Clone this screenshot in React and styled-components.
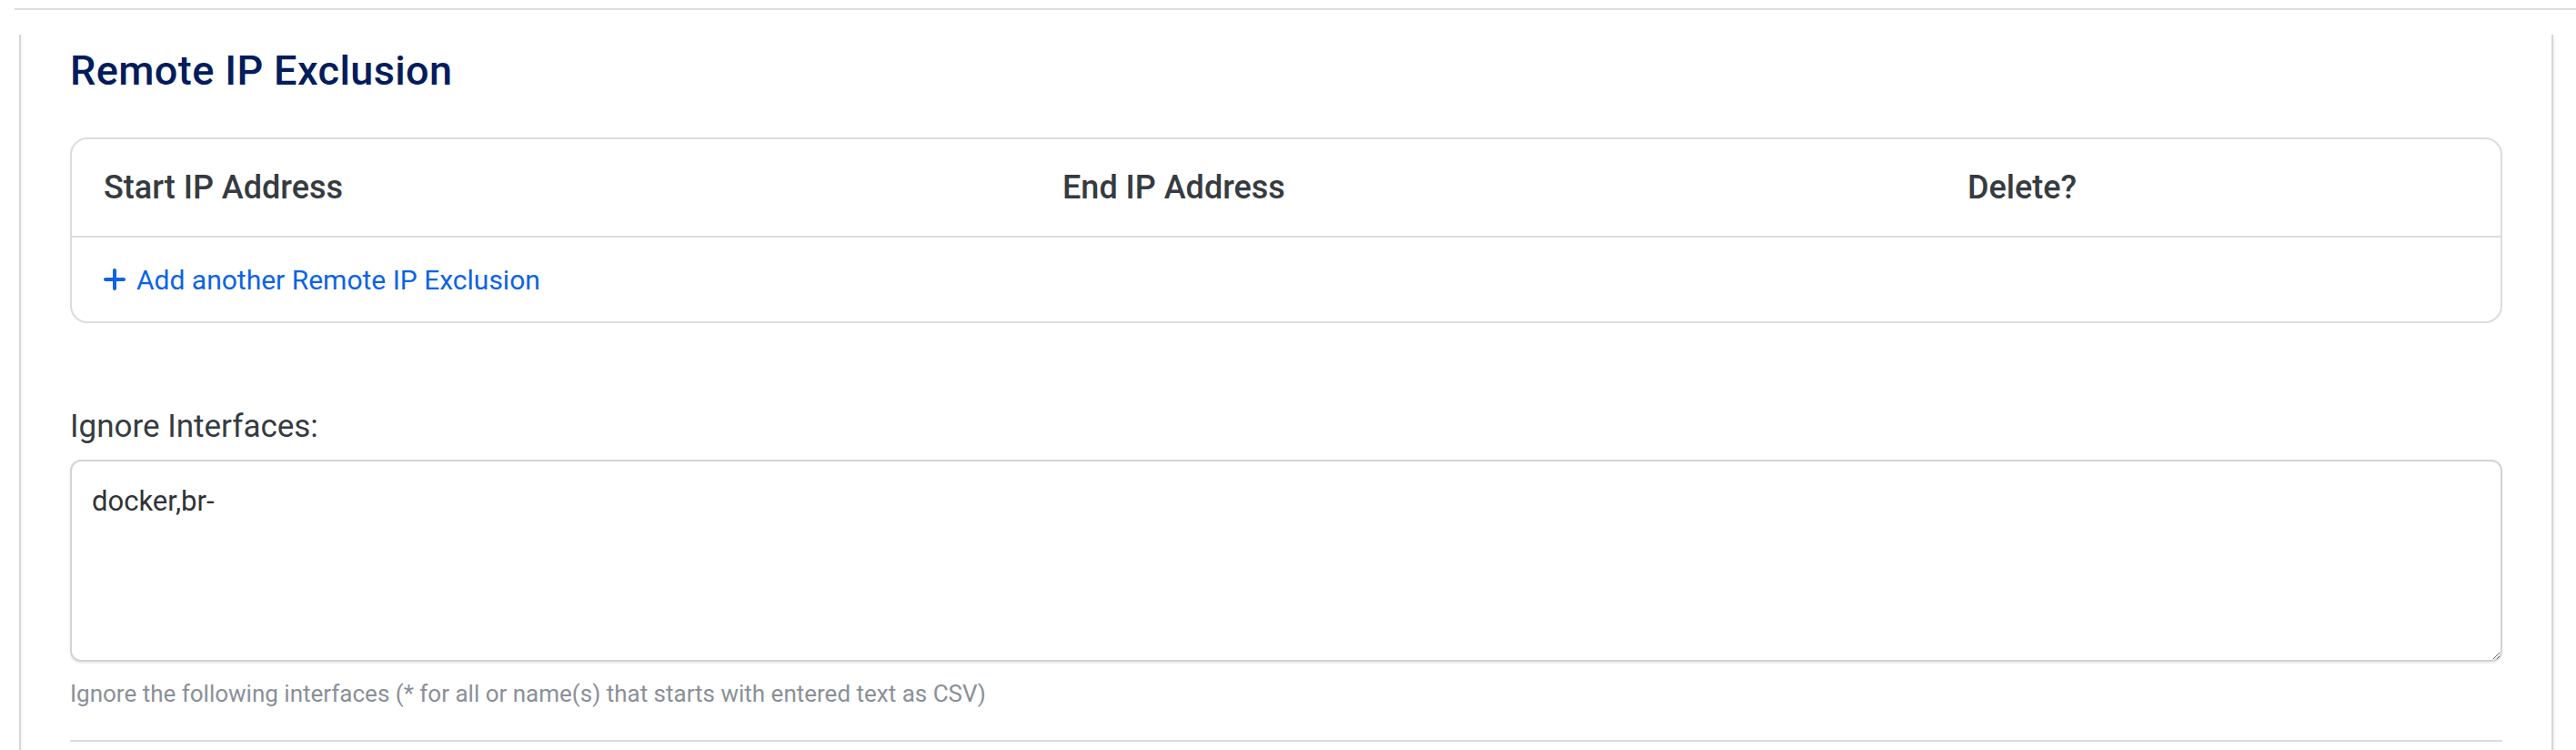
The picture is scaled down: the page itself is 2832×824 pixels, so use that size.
import React from "react";
import styled, { createGlobalStyle } from "styled-components";

const GlobalStyle = createGlobalStyle`
	body {
		margin: 0;
		background: #ffffff;
		font-family: Roboto, "Liberation Sans", sans-serif;
		overflow: hidden;
	}
`;

const columns = ["Start IP Address", "End IP Address", "Delete?"];

const PlusIcon = () => (
	<svg width="24" height="24" viewBox="0 0 24 24" fill="none">
		<path d="M12 2v20M2 12h20" stroke="currentColor" strokeWidth="4" strokeLinecap="round" />
	</svg>
);

const App = () => {
	return (
		<>
			<GlobalStyle />
			<TopRule />
			<Panel>
				<Title>Remote IP Exclusion</Title>
				<TableBox>
					<HeaderRow>
						{columns.map((col) => (
							<HeaderCell key={col}>{col}</HeaderCell>
						))}
					</HeaderRow>
					<LinkRow>
						<AddLink href="#">
							<PlusIcon />
							Add another Remote IP Exclusion
						</AddLink>
					</LinkRow>
				</TableBox>
				<Field>
					<Label>Ignore Interfaces:</Label>
					<TextArea defaultValue="docker,br-" />
					<Hint>
						Ignore the following interfaces (* for all or name(s) that starts with
						entered text as CSV)
					</Hint>
				</Field>
				<BottomRule />
			</Panel>
		</>
	);
};

const TopRule = styled.div`
	margin: 9px 0 0 16px;
	height: 2px;
	background: #d9dce0;
`;

const Panel = styled.div`
	margin: 27px 25px 0 21px;
	height: 800px;
	padding: 14px 54px 0;
	border-left: 2px solid #d7d7d7;
	border-right: 2px solid #d7d7d7;
	box-shadow: inset 3px 0 3px -2px rgba(0, 0, 0, 0.06), 3px 0 4px -2px rgba(0, 0, 0, 0.08);
`;

const Title = styled.h2`
	margin: 0 0 47px;
	font-size: 45px;
	line-height: 52px;
	font-weight: 500;
	letter-spacing: 0.4px;
	color: #031c5c;
`;

const TableBox = styled.div`
	border: 2px solid #dadce0;
	border-radius: 19px;
`;

const HeaderRow = styled.div`
	display: grid;
	grid-template-columns: 1054px 995px 1fr;
	height: 106px;
	align-items: center;
`;

const HeaderCell = styled.div`
	padding: 0 35px;
	font-size: 36px;
	font-weight: 500;
	color: #363b41;
`;

const LinkRow = styled.div`
	display: flex;
	align-items: center;
	height: 92px;
	padding: 0 35px;
	border-top: 2px solid #dadce0;
`;

const AddLink = styled.a`
	display: flex;
	align-items: center;
	gap: 12px;
	font-size: 30px;
	color: #0c63e6;
	text-decoration: none;
`;

const Field = styled.div`
	display: flex;
	flex-direction: column;
	margin-top: 93px;
`;

const Label = styled.label`
	font-size: 35px;
	line-height: 42px;
	color: #363b41;
	margin-bottom: 15px;
`;

const TextArea = styled.textarea`
	box-sizing: border-box;
	height: 222px;
	padding: 24px 22px;
	border: 2px solid #d3d3d3;
	border-radius: 12px;
	box-shadow: 0 2px 2px rgba(0, 0, 0, 0.08);
	font-family: Roboto, "Liberation Sans", sans-serif;
	font-size: 31px;
	line-height: 40px;
	color: #2f3338;
	outline: none;
`;

const Hint = styled.div`
	margin-top: 18px;
	font-size: 26px;
	line-height: 34px;
	color: #8a9098;
`;

const BottomRule = styled.div`
	margin-top: 34px;
	height: 2px;
	background: #d9dce0;
`;

export default App;
